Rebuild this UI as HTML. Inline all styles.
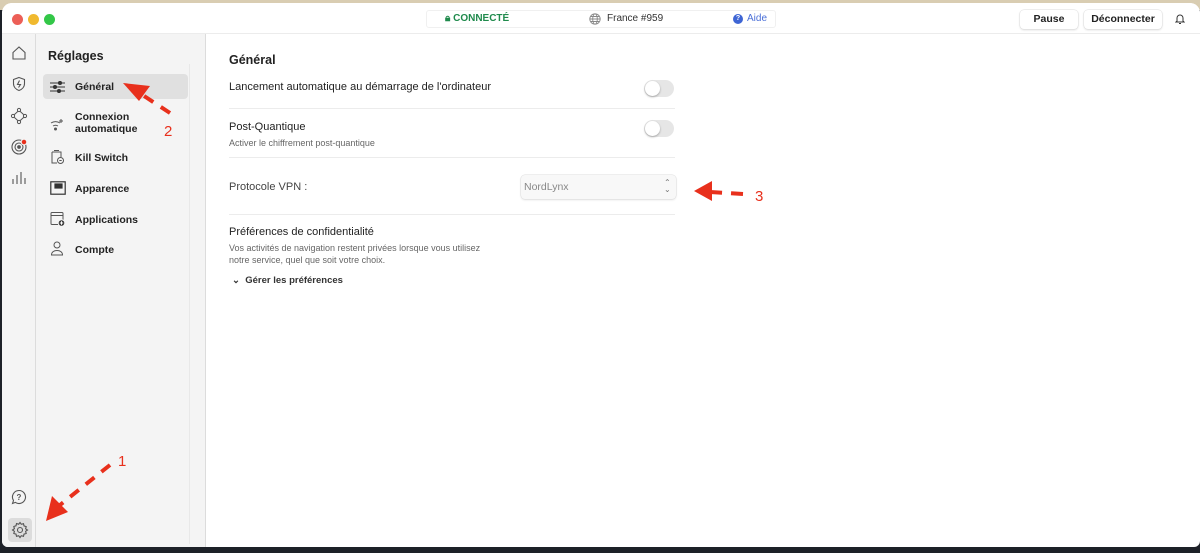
<!DOCTYPE html>
<html><head><meta charset="utf-8"><style>
*{margin:0;padding:0;box-sizing:border-box}
body{width:1200px;height:553px;overflow:hidden;background:#1d2128;font-family:"Liberation Sans",sans-serif;position:relative;color:#222}
.bgtop{position:absolute;left:0;top:0;width:1200px;height:10px;background:#d9cdb2}
.win{position:absolute;left:2px;top:3px;width:1198px;height:544px;background:#fff;border-radius:10px 10px 6px 6px;overflow:hidden}
.title{position:absolute;left:0;top:0;width:100%;height:31px;border-bottom:1px solid #ececec;background:#fff}
.dot{position:absolute;top:11px;width:11px;height:11px;border-radius:50%}
.rail{position:absolute;left:0;top:31px;width:34px;bottom:0;background:#f4f4f4;border-right:1px solid #dcdcdc}
.side{position:absolute;left:34px;top:31px;width:170px;bottom:0;background:#f4f4f4;border-right:1px solid #dcdcdc}
.a{position:absolute;font-size:11px}
.item{position:absolute;left:39px;font-size:10.5px;font-weight:bold;color:#222}
.ic{position:absolute;left:14px;color:#555}
.line{position:absolute;left:227px;width:446px;height:1px;background:#ececec}
.tog{position:absolute;left:642px;width:30px;height:17px;border-radius:9px;background:#e6e6e6}
.tog:after{content:"";position:absolute;left:1px;top:1px;width:15px;height:15px;border-radius:50%;background:#fff;box-shadow:0 1px 2px rgba(0,0,0,.3)}
.btn{position:absolute;top:7px;height:19px;border-radius:4px;background:#fff;box-shadow:0 0 0 .5px #ddd,0 1px 2px rgba(0,0,0,.15);font-size:10.5px;font-weight:bold;text-align:center;line-height:19px}
.red{color:#e8301c;font-size:15px;position:absolute}
</style></head><body>
<div class="bgtop"></div>
<div class="win">
 <div class="title">
  <div class="dot" style="left:10px;background:#ec5f57"></div>
  <div class="dot" style="left:26px;background:#f0b92f"></div>
  <div class="dot" style="left:42px;background:#33c748"></div>
  <div style="position:absolute;left:424px;top:7px;width:350px;height:18px;border:1px solid #f0f0f0;border-radius:3px"></div>
  <div class="a" style="left:443px;top:10px;font-size:10px;font-weight:bold;color:#1f8a4c">🔒︎ CONNECTÉ</div>
  <svg style="position:absolute;left:587px;top:10px" width="12" height="12" viewBox="0 0 12 12" fill="none" stroke="#888" stroke-width=".9"><circle cx="6" cy="6" r="5.2"/><ellipse cx="6" cy="6" rx="2.3" ry="5.2"/><path d="M1 6h10M1.8 3.5h8.4M1.8 8.5h8.4"/></svg>
  <div class="a" style="left:605px;top:10px;font-size:10px;color:#333">France #959</div>
  <div style="position:absolute;left:731px;top:11px;width:10px;height:10px;border-radius:50%;background:#3e65d4;color:#fff;font-size:7px;text-align:center;line-height:10px;font-weight:bold">?</div>
  <div class="a" style="left:745px;top:10px;font-size:10px;color:#4a6fd8">Aide</div>
  <div class="btn" style="left:1018px;width:58px">Pause</div>
  <div class="btn" style="left:1082px;width:78px">Déconnecter</div>
  <svg style="position:absolute;left:1173px;top:10px" width="10" height="12" viewBox="0 0 10 12" fill="none" stroke="#333" stroke-width="1"><path d="M2 8V5a3 3 0 0 1 6 0v3l1 1H1z M4 10.5h2"/></svg>
 </div>
 <div class="rail">
  <svg style="position:absolute;left:9px;top:11px" width="16" height="16" viewBox="0 0 16 16" fill="none" stroke="#555" stroke-width="1.1"><path d="M2 7.5L8 2l6 5.5V14H2z"/></svg>
  <svg style="position:absolute;left:9px;top:42px" width="16" height="16" viewBox="0 0 16 16" fill="none" stroke="#555" stroke-width="1.1"><path d="M8 1.5l5.5 2v4c0 3.5-2.5 6-5.5 7-3-1-5.5-3.5-5.5-7v-4z"/><path d="M8.5 4.5L6.5 8.5h3L7.5 11.5" /></svg>
  <svg style="position:absolute;left:8px;top:73px" width="18" height="18" viewBox="0 0 18 18" fill="none" stroke="#555" stroke-width="1"><circle cx="9" cy="3" r="1.6"/><circle cx="3" cy="9" r="1.6"/><circle cx="15" cy="9" r="1.6"/><circle cx="9" cy="15" r="1.6"/><path d="M8 4.3L4.2 7.8M10 4.3l3.8 3.5M4.2 10.2L8 13.7M13.8 10.2L10 13.7"/></svg>
  <svg style="position:absolute;left:8px;top:104px" width="18" height="18" viewBox="0 0 18 18" fill="none" stroke="#555" stroke-width="1.1"><circle cx="9" cy="9" r="7"/><circle cx="9" cy="9" r="4"/><circle cx="9" cy="9" r="1.3" fill="#555"/><circle cx="14" cy="4" r="2.8" fill="#e8301c" stroke="#f4f4f4"/></svg>
  <svg style="position:absolute;left:9px;top:136px" width="16" height="16" viewBox="0 0 16 16" fill="none" stroke="#555" stroke-width="1.1"><path d="M2 14V9M6 14V5M10 14V2M14 14V8"/></svg>
  <svg style="position:absolute;left:9px;top:455px" width="16" height="16" viewBox="0 0 16 16" fill="none" stroke="#555" stroke-width="1.1"><path d="M8 1.5a6.5 6.5 0 1 1-3.6 11.9L1.5 14.5l1-3A6.5 6.5 0 0 1 8 1.5z"/><text x="8" y="11" font-size="8" text-anchor="middle" fill="#555" stroke="none" font-family="Liberation Sans" font-weight="bold">?</text></svg>
  <div style="position:absolute;left:6px;top:484px;width:24px;height:24px;border-radius:4px;background:#dcdcdc"></div>
  <svg style="position:absolute;left:9px;top:487px" width="18" height="18" viewBox="0 0 18 18" fill="none" stroke="#555" stroke-width="1.1"><circle cx="9" cy="9" r="2.5"/><path d="M9 1.5l1.3 1.8 2.2-.6.5 2.2 2.2.7-.6 2.2L16.5 9l-1.9 1.3.6 2.2-2.2.6-.5 2.2-2.2-.6L9 16.5l-1.3-1.8-2.2.6-.5-2.2-2.2-.6.6-2.2L1.5 9l1.9-1.3-.6-2.2 2.2-.7.5-2.2 2.2.6z"/></svg>
 </div>
 <div class="side">
  <div class="a" style="left:12px;top:15px;font-size:12.5px;font-weight:bold">Réglages</div>
  <div style="position:absolute;left:153px;top:30px;width:1px;height:480px;background:#e8e8e8"></div>
  <div style="position:absolute;left:7px;top:40px;width:145px;height:25px;border-radius:4px;background:#e0e0e0"></div>
  <svg class="ic" style="top:47px" width="15" height="12" viewBox="0 0 15 12" stroke="#333" stroke-width="1.1"><path d="M0 2h15M0 6h15M0 10h15"/><circle cx="10" cy="2" r="1.5" fill="#333"/><circle cx="5" cy="6" r="1.5" fill="#333"/><circle cx="9" cy="10" r="1.5" fill="#333"/></svg>
  <div class="item" style="top:47px">Général</div>
  <svg class="ic" style="top:84px" width="14" height="14" viewBox="0 0 14 14" fill="none" stroke="#555" stroke-width="1"><path d="M1 5a8 8 0 0 1 9 0M3 8a5 5 0 0 1 5 0"/><circle cx="5.5" cy="11" r="1" fill="#555"/><path d="M11 1v4M9 3h4"/></svg>
  <div class="item" style="top:77px;line-height:12px">Connexion<br>automatique</div>
  <svg class="ic" style="top:115px" width="15" height="16" viewBox="0 0 15 16" fill="none" stroke="#555" stroke-width="1"><path d="M2 3h9v5M2 3v11h5"/><path d="M4 1.5h5"/><circle cx="10.5" cy="11.5" r="3"/><path d="M9.3 11.5h2.4"/></svg>
  <div class="item" style="top:118px">Kill Switch</div>
  <svg class="ic" style="top:147px" width="16" height="14" viewBox="0 0 16 14" fill="none" stroke="#333" stroke-width="1.2"><rect x=".8" y=".8" width="14.4" height="12.4"/><rect x="5" y="3" width="7" height="4" fill="#333"/></svg>
  <div class="item" style="top:149px">Apparence</div>
  <svg class="ic" style="top:177px" width="16" height="16" viewBox="0 0 16 16" fill="none" stroke="#555" stroke-width="1"><rect x="1" y="1.5" width="12" height="12" rx="1"/><path d="M1 4.5h12"/><circle cx="11.5" cy="12" r="3.3" fill="#333" stroke="#f4f4f4"/><path d="M11.5 10.3v3.4M9.8 12h3.4" stroke="#fff"/></svg>
  <div class="item" style="top:180px">Applications</div>
  <svg class="ic" style="top:207px" width="14" height="16" viewBox="0 0 14 16" fill="none" stroke="#555" stroke-width="1"><circle cx="7" cy="4" r="3"/><path d="M1.5 14c0-3 2.5-4.5 5.5-4.5s5.5 1.5 5.5 4.5z"/></svg>
  <div class="item" style="top:210px">Compte</div>
 </div>
 <div class="a" style="left:227px;top:50px;font-size:12.5px;font-weight:bold">Général</div>
 <div class="a" style="left:227px;top:78px">Lancement automatique au démarrage de l'ordinateur</div>
 <div class="tog" style="top:77px"></div>
 <div class="line" style="top:105px"></div>
 <div class="a" style="left:227px;top:118px">Post-Quantique</div>
 <div class="a" style="left:227px;top:135px;font-size:9px;color:#666">Activer le chiffrement post-quantique</div>
 <div class="tog" style="top:117px"></div>
 <div class="line" style="top:154px"></div>
 <div class="a" style="left:227px;top:178px;color:#444">Protocole VPN :</div>
 <div style="position:absolute;left:519px;top:172px;width:155px;height:24px;border-radius:4px;background:#f8f8f8;box-shadow:0 0 0 .5px #ddd,0 1px 2px rgba(0,0,0,.12)"></div>
 <div class="a" style="left:522px;top:178px;color:#888;font-size:10.5px">NordLynx</div>
 <div class="a" style="left:662px;top:176px;color:#777;font-size:8px;line-height:7px">⌃<br>⌄</div>
 <div class="line" style="top:211px"></div>
 <div class="a" style="left:227px;top:223px">Préférences de confidentialité</div>
 <div class="a" style="left:227px;top:239px;font-size:9px;color:#666;line-height:12px">Vos activités de navigation restent privées lorsque vous utilisez<br>notre service, quel que soit votre choix.</div>
 <div class="a" style="left:230px;top:272px;font-size:9.5px;font-weight:bold;color:#333">⌄&nbsp; Gérer les préférences</div>
</div>
<svg style="position:absolute;left:0;top:0" width="1200" height="553" fill="none">
 <path d="M110 465L60 505" stroke="#e8301c" stroke-width="4" stroke-dasharray="11 9"/>
 <path d="M46 521L52 496L68 512z" fill="#e8301c"/>
 <path d="M170 113L138 92" stroke="#e8301c" stroke-width="4" stroke-dasharray="11 9"/>
 <path d="M123 83L150 86L139 101z" fill="#e8301c"/>
 <path d="M743 194L710 192" stroke="#e8301c" stroke-width="4" stroke-dasharray="12 9"/>
 <path d="M694 191L712 181L712 201z" fill="#e8301c"/>
</svg>
<div class="red" style="left:118px;top:453px">1</div>
<div class="red" style="left:164px;top:123px">2</div>
<div class="red" style="left:755px;top:188px">3</div>
</body></html>
